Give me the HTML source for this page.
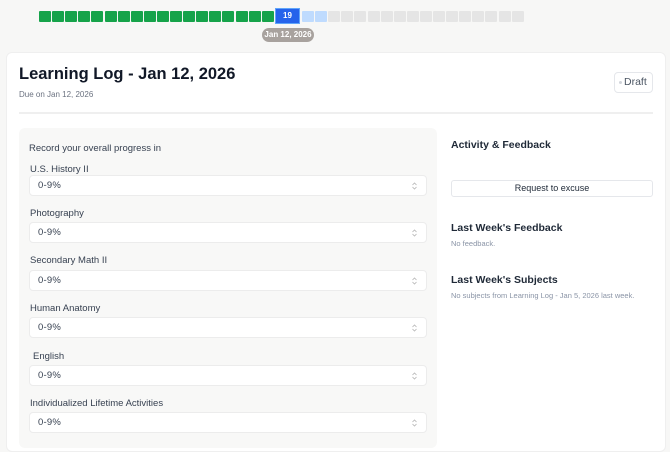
<!DOCTYPE html>
<html><head><style>
*{box-sizing:border-box;margin:0;padding:0}
body{width:670px;height:441px;overflow:hidden;background:#f7f7f6;font-family:"Liberation Sans",sans-serif;position:relative;color:#1a1d24}
.sq{position:absolute;top:11px;width:12px;height:11px;border-radius:1px}
.g{background:#16a34a}
.lb{background:#bfdbfe}
.gr{background:#e5e5e5}
.cur{position:absolute;left:275px;top:8px;width:25px;height:16px;background:#2563eb;border:1px solid #60a5fa;color:#fff;font-size:8px;font-weight:bold;text-align:center;line-height:14px}
.tip{position:absolute;left:262px;top:28px;width:52px;height:14px;border-radius:7px;background:#a8a29e;color:#fff;font-size:8px;font-weight:bold;text-align:center;line-height:14px}
.card{position:absolute;left:6px;top:52px;width:660px;height:400px;background:#fff;border-radius:6px;border:1px solid #efefef}
h1{position:absolute;left:19px;top:65px;font-size:16.5px;font-weight:bold;color:#111827}
.due{position:absolute;left:19px;top:90px;font-size:8px;color:#6b7280}
.draft{position:absolute;left:614px;top:72px;width:39px;height:21px;border:1px solid #e5e7eb;border-radius:4px;font-size:10.5px;color:#4b5563;line-height:19px;padding-left:4px}
.draft i{display:inline-block;width:3px;height:3px;border-radius:50%;background:#d1d5db;vertical-align:middle;margin-right:2px}
.hr{position:absolute;left:19px;top:112px;width:634px;height:2px;background:#efefef}
.panel{position:absolute;left:19px;top:128px;width:418px;height:320px;background:#f8f8f7;border-radius:6px}
.lbl{position:absolute;left:30px;font-size:9.5px;color:#374151}
.sel{position:absolute;left:29px;width:398px;height:21px;background:#fff;border:1px solid #ececec;border-radius:4px;font-size:9.5px;color:#374151;line-height:19px;padding-left:8px;letter-spacing:.2px}
.ar{position:absolute;right:9px;top:6px}
h3{position:absolute;left:451px;font-size:10.5px;font-weight:bold;color:#1f2937}
.sm{position:absolute;left:451px;font-size:7.5px;color:#8a94a6}
.btn{position:absolute;left:451px;top:180px;width:202px;height:17px;border:1px solid #e5e7eb;border-radius:3px;font-size:9px;text-align:center;line-height:15px;color:#1f2937}
</style></head><body>
<div id="bar"></div>
<div class="cur">19</div>
<div class="tip">Jan 12, 2026</div>
<div class="card"></div>
<h1>Learning Log - Jan 12, 2026</h1>
<div class="due">Due on Jan 12, 2026</div>
<div class="draft"><i></i>Draft</div>
<div class="hr"></div>
<div class="panel"></div>
<div class="lbl" style="left:29px;top:143px">Record your overall progress in</div>
<div class="lbl" style="top:164px">U.S. History II</div>
<div class="sel" style="top:175px">0-9%<svg class="ar" width="5" height="8" viewBox="0 0 5 8"><path d="M0.5 3L2.5 1L4.5 3M0.5 5L2.5 7L4.5 5" fill="none" stroke="#b5b5b5" stroke-width=".8"/></svg></div>
<div class="lbl" style="top:208px">Photography</div>
<div class="sel" style="top:222px">0-9%<svg class="ar" width="5" height="8" viewBox="0 0 5 8"><path d="M0.5 3L2.5 1L4.5 3M0.5 5L2.5 7L4.5 5" fill="none" stroke="#b5b5b5" stroke-width=".8"/></svg></div>
<div class="lbl" style="top:255px">Secondary Math II</div>
<div class="sel" style="top:270px">0-9%<svg class="ar" width="5" height="8" viewBox="0 0 5 8"><path d="M0.5 3L2.5 1L4.5 3M0.5 5L2.5 7L4.5 5" fill="none" stroke="#b5b5b5" stroke-width=".8"/></svg></div>
<div class="lbl" style="top:303px">Human Anatomy</div>
<div class="sel" style="top:317px">0-9%<svg class="ar" width="5" height="8" viewBox="0 0 5 8"><path d="M0.5 3L2.5 1L4.5 3M0.5 5L2.5 7L4.5 5" fill="none" stroke="#b5b5b5" stroke-width=".8"/></svg></div>
<div class="lbl" style="left:33px;top:351px">English</div>
<div class="sel" style="top:365px">0-9%<svg class="ar" width="5" height="8" viewBox="0 0 5 8"><path d="M0.5 3L2.5 1L4.5 3M0.5 5L2.5 7L4.5 5" fill="none" stroke="#b5b5b5" stroke-width=".8"/></svg></div>
<div class="lbl" style="top:398px">Individualized Lifetime Activities</div>
<div class="sel" style="top:412px">0-9%<svg class="ar" width="5" height="8" viewBox="0 0 5 8"><path d="M0.5 3L2.5 1L4.5 3M0.5 5L2.5 7L4.5 5" fill="none" stroke="#b5b5b5" stroke-width=".8"/></svg></div>
<h3 style="top:139px">Activity &amp; Feedback</h3>
<div class="btn">Request to excuse</div>
<h3 style="top:222px">Last Week's Feedback</h3>
<div class="sm" style="top:239px">No feedback.</div>
<h3 style="top:274px">Last Week's Subjects</h3>
<div class="sm" style="top:291px">No subjects from Learning Log - Jan 5, 2026 last week.</div>
<script>
var b=document.getElementById('bar'),h='';
for(var i=0;i<18;i++)h+='<div class="sq g" style="left:'+(39+i*13.1)+'px"></div>';
for(var j=0;j<17;j++)h+='<div class="sq '+(j<2?'lb':'gr')+'" style="left:'+(302+j*13.1)+'px"></div>';
b.innerHTML=h;
</script>
</body></html>
